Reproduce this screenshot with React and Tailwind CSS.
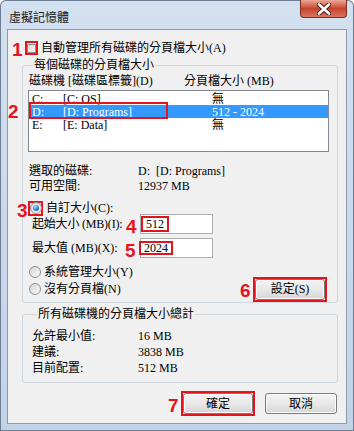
import React from "react";

const drives = [
  { letter: "C:", label: "[C: OS]", size: "無" },
  { letter: "D:", label: "[D: Programs]", size: "512 - 2024", selected: true },
  { letter: "E:", label: "[E: Data]", size: "無" },
];

function Mark({ n, className }) {
  return (
    <span
      className={`absolute font-['Liberation_Sans',sans-serif] font-bold text-[19px] leading-none text-[#e3141c] ${className}`}
    >
      {n}
    </span>
  );
}

function Radio({ checked }) {
  return (
    <span className="w-[12px] h-[12px] rounded-full border border-[#8e8f8f] bg-linear-to-br from-[#d4d4d4] to-[#fbfbfb] flex items-center justify-center shrink-0">
      {checked && (
        <span className="w-[6px] h-[6px] rounded-full bg-[radial-gradient(circle_at_35%_30%,#a8e2ff,#2a7fd4_55%,#0c3c80)]" />
      )}
    </span>
  );
}

function Button({ children, marked, className = "" }) {
  const btn = (
    <button
      className={`h-[21px] rounded-[3px] border border-[#7a7a7a] bg-linear-to-b from-[#f4f4f4] via-[#e8e8e8] to-[#d6d6d6] shadow-[inset_0_0_0_1px_#fcfcfc] text-[12px] leading-none ${className}`}
    >
      {children}
    </button>
  );
  if (!marked) return btn;
  // annotation frame: square red box hugging the button
  return <span className="flex border-2 border-[#e3141c]">{btn}</span>;
}

export default function App() {
  return (
    <div className="w-[354px] h-[431px] bg-linear-to-b from-[#d3e0ef] to-[#c2d3e6] flex flex-col px-[7px] pb-[7px] rounded-t-[6px] shadow-[inset_0_0_0_1px_#6d7e94] font-['Liberation_Serif','Noto_Sans_CJK_TC',serif] text-[12px] leading-[14px] text-black">
      {/* title bar */}
      <div className="h-[29px] flex items-start justify-between shrink-0">
        <span className="mt-[10px] ml-[2px] font-['Noto_Sans_CJK_TC',sans-serif] text-[#1a1a1a]">虛擬記憶體</span>
        <div className="w-[47px] h-[18px] rounded-b-[4px] border border-t-0 border-[#7a2d22] bg-linear-to-b from-[#e9a898] via-[#c7432c] to-[#d9745d] flex items-center justify-center">
          <svg width="14" height="12" viewBox="0 0 14 12">
            <path d="M2 1.5 L12 10.5 M12 1.5 L2 10.5" stroke="#4a1a14" strokeWidth="4.5" strokeLinecap="round" />
            <path d="M2 1.5 L12 10.5 M12 1.5 L2 10.5" stroke="#ffffff" strokeWidth="2.6" strokeLinecap="round" />
          </svg>
        </div>
      </div>

      {/* client area */}
      <div className="flex-1 bg-[#f0f0f0] border border-[#8a9cb1] flex flex-col pl-[14px] pr-[8px]">
        {/* auto manage */}
        <div className="relative mt-[11px] h-[14px] flex items-center">
          <Mark n="1" className="left-[-10px] top-[-1px]" />
          <span className="ml-[3px] w-[13px] h-[14px] border-2 border-[#e3141c] flex items-center justify-center">
            <span className="w-[9px] h-[9px] border border-[#8e8f8f] bg-linear-to-br from-[#d6d6d6] to-[#f8f8f8]" />
          </span>
          <span className="ml-[3px]">自動管理所有磁碟的分頁檔大小(A)</span>
        </div>

        {/* per-drive group */}
        <fieldset className="mt-[3px] border border-[#d0d9df] rounded-[3px] px-[5px] pb-[3px]">
          <legend className="ml-[5px] px-[1px] h-[14px]">每個磁碟的分頁檔大小</legend>
          <div className="mt-[2px] h-[14px] flex items-center">
            <span className="ml-[1px] w-[155px]">磁碟機 [磁碟區標籤](D)</span>
            <span>分頁檔大小 (MB)</span>
          </div>
          <div className="relative mt-[2px] h-[62px] mr-[3px] bg-white border border-[#828790] pt-[1px]">
            {drives.map((d) => (
              <div
                key={d.letter}
                className={`h-[13px] flex items-center ${d.selected ? "bg-[#3399ff] text-white" : ""}`}
              >
                <span className="ml-[3px] w-[31px]">{d.letter}</span>
                <span className="w-[149px]">{d.label}</span>
                <span>{d.size}</span>
              </div>
            ))}
            <span className="absolute left-[0px] top-[11px] w-[139px] h-[17px] border-2 border-[#e3141c]" />
            <Mark n="2" className="left-[-21px] top-[11px]" />
          </div>

          <div className="mt-[11px] ml-[1px] flex flex-col">
            <div className="h-[15px] flex items-center">
              <span className="w-[109px]">選取的磁碟:</span>
              <span>D:&nbsp; [D: Programs]</span>
            </div>
            <div className="h-[15px] flex items-center">
              <span className="w-[109px]">可用空間:</span>
              <span>12937 MB</span>
            </div>
          </div>

          {/* custom size */}
          <div className="relative mt-[9px] h-[12px] flex items-center">
            <Mark n="3" className="left-[-11px] top-[-1px]" />
            <span className="w-[15px] h-[15px] border-2 border-[#e3141c] flex items-center justify-center">
              <Radio checked />
            </span>
            <span className="ml-[3px]">自訂大小(C):</span>
          </div>
          <div className="relative h-[20px] flex items-center">
            <span className="ml-[4px] w-[108px] tracking-[-0.2px]">起始大小 (MB)(I):</span>
            <Mark n="4" className="left-[98px] top-[3px]" />
            <div className="w-[73px] h-[20px] bg-white border border-[#abadb3] flex items-center">
              <span className="h-[16px] px-[3px] border-2 border-[#e3141c] flex items-center">512</span>
            </div>
          </div>
          <div className="relative mt-[4px] h-[20px] flex items-center">
            <span className="ml-[4px] w-[108px]">最大值 (MB)(X):</span>
            <Mark n="5" className="left-[97px] top-[3px]" />
            <div className="w-[73px] h-[20px] bg-white border border-[#abadb3] flex items-center">
              <span className="ml-[-2px] h-[14px] px-[3px] border-2 border-[#e3141c] flex items-center">2024</span>
            </div>
          </div>

          <div className="mt-[7px] h-[14px] flex items-center">
            <span className="ml-[1px]">
              <Radio />
            </span>
            <span className="ml-[3px]">系統管理大小(Y)</span>
          </div>
          <div className="relative h-[20px] flex items-center">
            <span className="ml-[1px]">
              <Radio />
            </span>
            <span className="ml-[3px]">沒有分頁檔(N)</span>
            <Mark n="6" className="left-[212px] top-[2px]" />
            <span className="ml-auto mr-[5px]">
              <Button marked className="w-[70px] h-[19px]">
                設定(S)
              </Button>
            </span>
          </div>
        </fieldset>

        {/* totals group */}
        <fieldset className="mt-[4px] border border-[#d0d9df] rounded-[3px] px-[9px] pb-[6px]">
          <legend className="ml-[5px] px-[1px] h-[14px]">所有磁碟機的分頁檔大小總計</legend>
          <div className="mt-[7px] flex flex-col">
            {[
              ["允許最小值:", "16 MB"],
              ["建議:", "3838 MB"],
              ["目前配置:", "512 MB"],
            ].map(([k, v]) => (
              <div key={k} className="h-[16px] flex items-center">
                <span className="w-[106px]">{k}</span>
                <span>{v}</span>
              </div>
            ))}
          </div>
        </fieldset>

        {/* dialog buttons */}
        <div className="relative mt-[8px] flex items-center justify-end gap-[10px] pr-[1px]">
          <Mark n="7" className="left-[146px] top-[5px]" />
          <Button marked className="w-[70px]">
            確定
          </Button>
          <Button className="w-[72px]">取消</Button>
        </div>
      </div>
    </div>
  );
}
